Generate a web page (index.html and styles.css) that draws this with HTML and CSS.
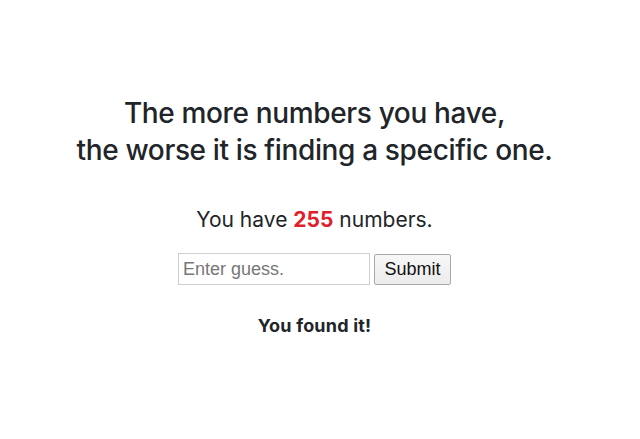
FILE: index.html
```html
<!DOCTYPE html>
<html>
<head>
<meta charset="utf-8">
<link rel="stylesheet" href="styles.css">
</head>
<body>
<main class="page">
  <h1 class="title">The more numbers you have,<br>the worse it is finding a specific one.</h1>
  <p class="count">You have <span class="num">255</span> numbers.</p>
  <form class="guess">
    <input class="field" type="text" placeholder="Enter guess.">
    <button class="submit" type="button">Submit</button>
  </form>
  <p class="result">You found it!</p>
</main>
</body>
</html>
```
FILE: styles.css
```css
html, body {
  margin: 0;
  background: #ffffff;
}
.page {
  display: flex;
  flex-direction: column;
  align-items: center;
  padding: 95px 11px 0 0;
  font-family: Inter, "Liberation Sans", sans-serif;
  color: #212529;
  text-align: center;
}
.title {
  margin: 0;
  font-size: 28px;
  line-height: 37px;
  font-weight: 500;
  letter-spacing: -0.35px;
}
.count {
  margin: 38px 0 0;
  font-size: 21px;
  line-height: 26px;
}
.num {
  color: #e0202c;
  font-weight: 700;
}
.guess {
  display: flex;
  gap: 4px;
  margin-top: 20px;
}
.field {
  box-sizing: border-box;
  width: 192px;
  height: 32px;
  border: 1px solid #cfcfcf;
  padding: 0 4px;
  font-family: "Liberation Sans", Inter, sans-serif;
  font-size: 18px;
  color: #222;
  outline: none;
}
.field::placeholder {
  color: #777;
}
.submit {
  box-sizing: border-box;
  width: 77px;
  height: 31px;
  margin-top: 1px;
  border: 1px solid #a9a9a9;
  border-radius: 2px;
  background: linear-gradient(#f7f7f7, #ececec);
  font-family: "Liberation Sans", Inter, sans-serif;
  font-size: 18px;
  color: #111;
  padding: 0;
}
.result {
  margin: 29px 0 0;
  font-size: 18px;
  line-height: 24px;
  font-weight: 700;
  letter-spacing: 0.2px;
}
```
